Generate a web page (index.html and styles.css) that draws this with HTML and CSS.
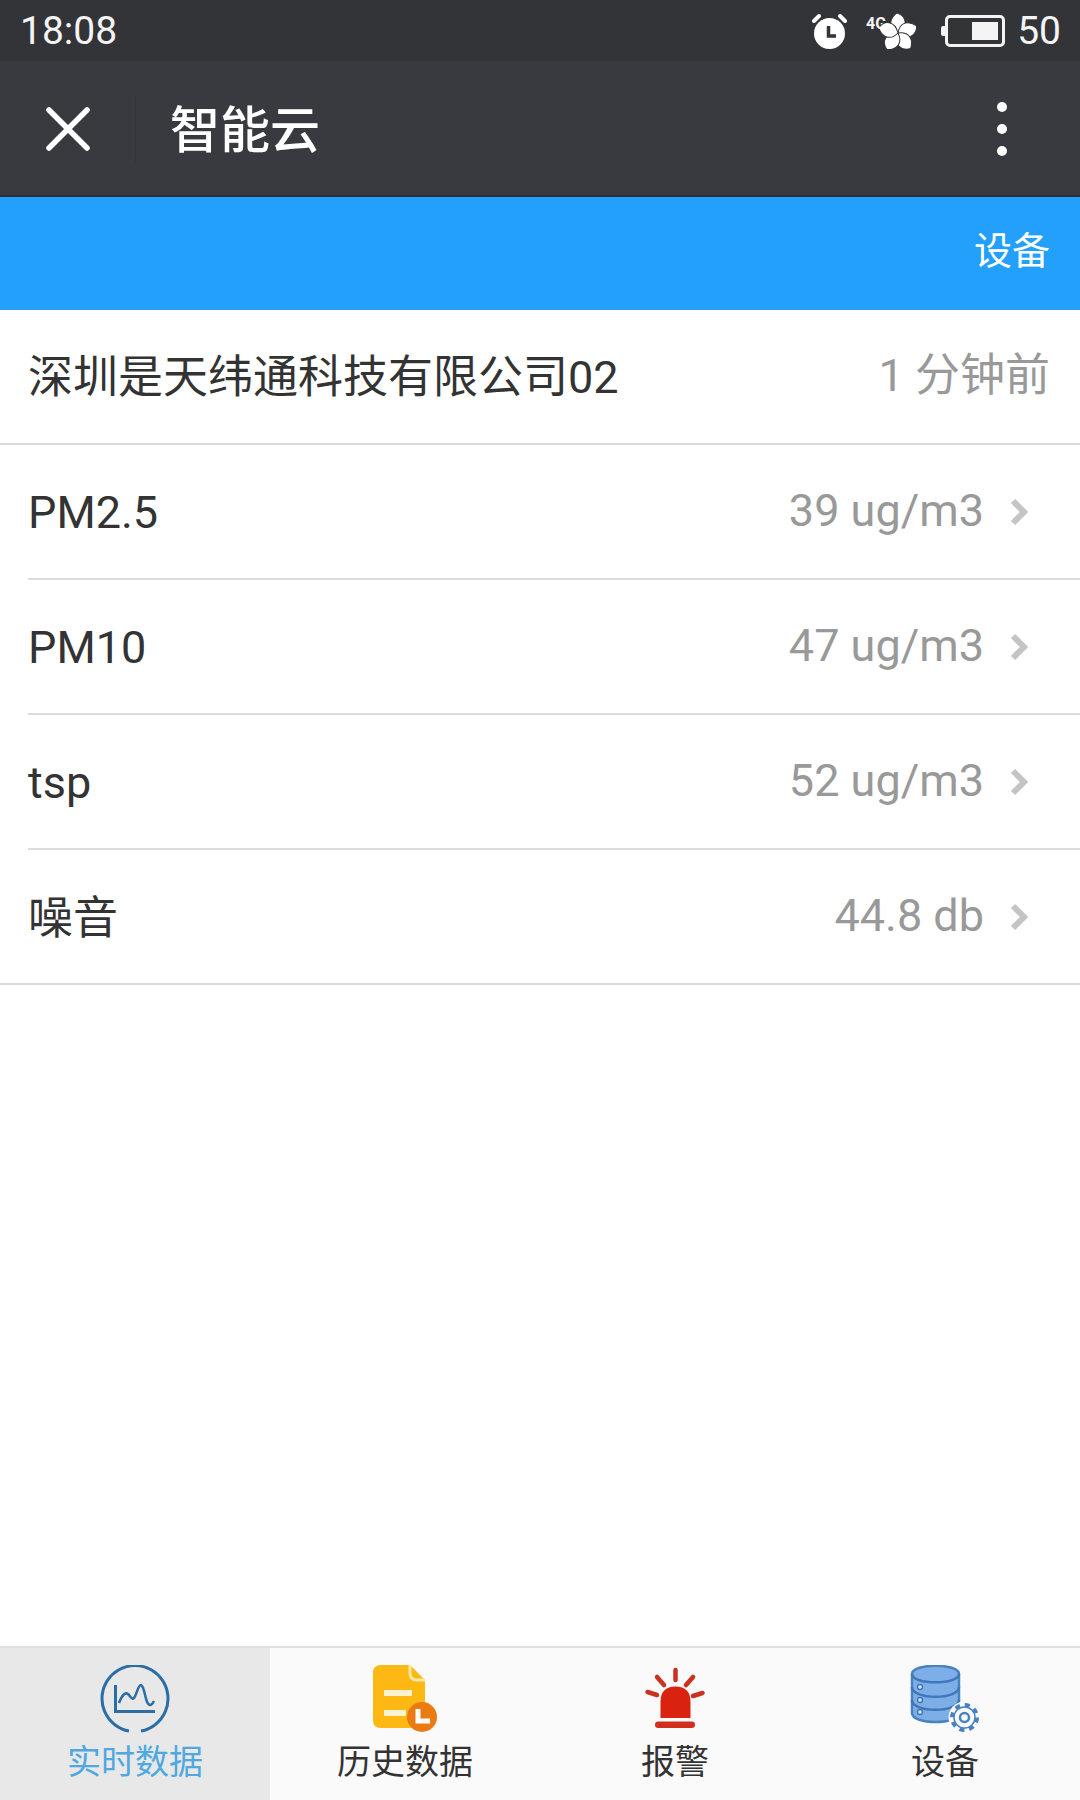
FILE: index.html
```html
<!DOCTYPE html>
<html>

<head>
    <title>智能云</title>
    <link rel="stylesheet" href="styles.css">
</head>

<body>
    <div class="page">
        <div class="status-bar">
            <span class="status-time">18:08</span>
            <div class="status-icons">
                <svg class="icon-alarm" viewBox="0 0 35 36" width="35" height="36">
                    <circle cx="17.5" cy="20.5" r="15.5" fill="#fff" />
                    <path d="M2 8 L7 3 M33 8 L28 3" stroke="#fff" stroke-width="4" stroke-linecap="round" />
                    <path d="M16.5 13 V23 H24" fill="none" stroke="#333438" stroke-width="3.5" />
                </svg>
                <div class="signal">
                    <span class="signal-label">4G</span>
                    <svg viewBox="0 0 36 36" width="36" height="36">
                        <g fill="#fff" stroke="#333438" stroke-width="1">
                            <path d="M18 20 C8 15 9 6 17 0 C26 3 29 13 18 20 Z" />
                            <path d="M18 20 C8 15 9 6 17 0 C26 3 29 13 18 20 Z" transform="rotate(72 18 20)" />
                            <path d="M18 20 C8 15 9 6 17 0 C26 3 29 13 18 20 Z" transform="rotate(144 18 20)" />
                            <path d="M18 20 C8 15 9 6 17 0 C26 3 29 13 18 20 Z" transform="rotate(216 18 20)" />
                            <path d="M18 20 C8 15 9 6 17 0 C26 3 29 13 18 20 Z" transform="rotate(288 18 20)" />
                        </g>
                    </svg>
                </div>
                <div class="battery">
                    <div class="battery-level"></div>
                </div>
                <span class="status-percent">50</span>
            </div>
        </div>

        <div class="nav-bar">
            <svg class="nav-close" viewBox="0 0 44 44" width="44" height="44">
                <path d="M3 3 L41 41 M41 3 L3 41" stroke="#fff" stroke-width="5.5" stroke-linecap="round" />
            </svg>
            <div class="nav-divider"></div>
            <span class="nav-title">智能云</span>
            <div class="nav-more">
                <span class="dot"></span>
                <span class="dot"></span>
                <span class="dot"></span>
            </div>
        </div>

        <div class="blue-bar">
            <span>设备</span>
        </div>

        <div class="device-row">
            <span class="row-name">深圳是天纬通科技有限公司02</span>
            <span class="row-value">1 分钟前</span>
        </div>

        <div class="data-list">
            <div class="data-row">
                <span class="row-name">PM2.5</span>
                <span class="row-value">39 ug/m3</span>
                <svg class="chevron" viewBox="0 0 18 28" width="18" height="28"><path d="M3 3 L14 14 L3 25" fill="none" stroke="#c4c4c4" stroke-width="6" /></svg>
            </div>
            <div class="data-row">
                <span class="row-name">PM10</span>
                <span class="row-value">47 ug/m3</span>
                <svg class="chevron" viewBox="0 0 18 28" width="18" height="28"><path d="M3 3 L14 14 L3 25" fill="none" stroke="#c4c4c4" stroke-width="6" /></svg>
            </div>
            <div class="data-row">
                <span class="row-name">tsp</span>
                <span class="row-value">52 ug/m3</span>
                <svg class="chevron" viewBox="0 0 18 28" width="18" height="28"><path d="M3 3 L14 14 L3 25" fill="none" stroke="#c4c4c4" stroke-width="6" /></svg>
            </div>
            <div class="data-row">
                <span class="row-name row-name-cjk">噪音</span>
                <span class="row-value">44.8 db</span>
                <svg class="chevron" viewBox="0 0 18 28" width="18" height="28"><path d="M3 3 L14 14 L3 25" fill="none" stroke="#c4c4c4" stroke-width="6" /></svg>
            </div>
        </div>

        <div class="spacer"></div>

        <div class="tab-bar">
            <div class="tab tab-active">
                <svg viewBox="0 0 70 70" width="70" height="70">
                    <path d="M29 66 A33 33 0 1 1 41 66" fill="none" stroke="#2b6ea6" stroke-width="3" />
                    <path d="M15.5 20 V46.5 H55" fill="none" stroke="#2b6ea6" stroke-width="3" />
                    <path d="M19 38 C22 30 25 27 28 29 C31 32 32 35 34 33 C37 29 38 20 41 20 C45 21 45 40 50 40 C52 40 53 38 54 36" fill="none" stroke="#2b6ea6" stroke-width="2.5" />
                </svg>
                <span>实时数据</span>
            </div>
            <div class="tab">
                <svg viewBox="0 0 70 70" width="70" height="70">
                    <path d="M11 0 H40 L55 15 V55 Q55 63 47 63 H11 Q3 63 3 55 V8 Q3 0 11 0 Z" fill="#fdb813" />
                    <path d="M40 0 V8 Q40 15 47 15 H55" fill="none" stroke="#fbe9a8" stroke-width="3" />
                    <path d="M14 28 H42 M14 48 H36" stroke="#fbf3d0" stroke-width="6" />
                    <circle cx="52" cy="52" r="15" fill="#ec7a12" />
                    <path d="M48 44 V56 H60" fill="none" stroke="#fff" stroke-width="5" />
                </svg>
                <span>历史数据</span>
            </div>
            <div class="tab">
                <svg viewBox="0 0 70 70" width="70" height="70">
                    <path d="M20.5 53 V37 Q20.5 21.5 35.5 21.5 Q50.5 21.5 50.5 37 V53 Z" fill="#d9230f" />
                    <rect x="15" y="56.5" width="40" height="6.5" rx="3.2" fill="#d2301c" />
                    <path d="M35.5 5 V15 M17 12 L24 20 M53 12 L46 20 M7.5 27 L17 30 M62.5 28 L53 31" stroke="#c8321f" stroke-width="4.5" stroke-linecap="round" />
                </svg>
                <span>报警</span>
            </div>
            <div class="tab">
                <svg viewBox="0 0 70 70" width="70" height="70">
                    <path d="M2 9 C2 -2 49 -2 49 9 V48 C49 60 2 60 2 48 Z" fill="#7eaee8" stroke="#4a82c0" stroke-width="2.5" />
                    <path d="M2 9 C2 20 49 20 49 9 M2 22 C2 35 49 35 49 22 M2 35 C2 48 49 48 49 35" fill="none" stroke="#3f78b8" stroke-width="2.5" />
                    <circle cx="10" cy="22" r="2.5" fill="#dce8f8" stroke="#3f78b8" stroke-width="1.5" />
                    <circle cx="10" cy="35" r="2.5" fill="#dce8f8" stroke="#3f78b8" stroke-width="1.5" />
                    <circle cx="10" cy="47" r="2.5" fill="#dce8f8" stroke="#3f78b8" stroke-width="1.5" />
                    <circle cx="54.5" cy="52.5" r="16" fill="#fafafa" />
                    <circle cx="54.5" cy="52.5" r="12.5" fill="none" stroke="#4a82c0" stroke-width="4" stroke-dasharray="5 4.8" />
                    <circle cx="54.5" cy="52.5" r="10.5" fill="#fafafa" stroke="#4a82c0" stroke-width="1.5" />
                    <circle cx="54.5" cy="52.5" r="4.5" fill="none" stroke="#4a82c0" stroke-width="2.5" />
                </svg>
                <span>设备</span>
            </div>
        </div>
    </div>
</body>

</html>
```

FILE: styles.css
```css
* {
    box-sizing: border-box;
}

body {
    margin: 0;
    font-family: Roboto, "Noto Sans CJK SC", sans-serif;
    background-color: #fff;
}

.page {
    width: 1080px;
    height: 1800px;
    display: flex;
    flex-direction: column;
    overflow: hidden;
}

.status-bar {
    height: 61px;
    padding: 0 19px 0 20px;
    display: flex;
    align-items: center;
    justify-content: space-between;
    background-color: #333438;
    color: #f4f4f4;
    font-size: 39px;
}

.status-icons {
    display: flex;
    align-items: center;
}

.icon-alarm {
    margin-right: 19px;
}

.signal {
    display: flex;
    align-items: center;
    margin-right: 29px;
}

.signal-label {
    font-size: 16px;
    font-weight: 700;
    margin-right: -6px;
    margin-top: -14px;
}

.battery {
    position: relative;
    width: 60px;
    height: 32px;
    margin-right: 12px;
    padding: 4px;
    display: flex;
    justify-content: flex-end;
    border: 3px solid #f4f4f4;
    border-radius: 5px;
}

.battery::before {
    content: "";
    position: absolute;
    left: -7px;
    top: 8px;
    width: 4px;
    height: 10px;
    background-color: #f4f4f4;
    border-radius: 2px 0 0 2px;
}

.battery-level {
    width: 26px;
    background-color: #f4f4f4;
}

.nav-bar {
    height: 136px;
    padding-top: 2px;
    padding-left: 46px;
    padding-right: 73px;
    display: flex;
    align-items: center;
    background-color: #393a3f;
    border-bottom: 2px solid #2b3136;
    color: #fff;
}

.nav-divider {
    width: 1px;
    height: 66px;
    margin-left: 45px;
    margin-right: 34px;
    background-color: #333438;
}

.nav-title {
    flex: 1;
    font-size: 50px;
    font-weight: 500;
    margin-top: -6px;
}

.nav-more {
    display: flex;
    flex-direction: column;
    gap: 12px;
}

.dot {
    width: 10px;
    height: 10px;
    border-radius: 50%;
    background-color: #fff;
}

.blue-bar {
    height: 113px;
    padding-right: 30px;
    padding-bottom: 12px;
    display: flex;
    align-items: center;
    justify-content: flex-end;
    background-color: #22a0fb;
    color: #fff;
    font-size: 38px;
}

.device-row {
    height: 135px;
    padding: 0 30px 0 28px;
    display: flex;
    align-items: center;
    justify-content: space-between;
    border-bottom: 2px solid #d9d9d9;
}

.row-name {
    flex: 1;
    margin-top: 2px;
    font-size: 45px;
    color: #333;
}

.row-value {
    margin-top: -2px;
    font-size: 45px;
    color: #999;
}

.device-row .row-name {
    margin-top: -7px;
}

.device-row .row-value {
    margin-top: -11px;
}

.row-name.row-name-cjk {
    margin-top: -4px;
}

.data-list {
    border-bottom: 2px solid #d9d9d9;
}

.data-row {
    height: 135px;
    margin-left: 28px;
    padding-right: 52px;
    display: flex;
    align-items: center;
    border-bottom: 2px solid #dcdcdc;
}

.data-row:last-child {
    height: 133px;
    border-bottom: none;
}

.chevron {
    margin-left: 26px;
}

.spacer {
    flex: 1;
}

.tab-bar {
    height: 154px;
    display: flex;
    background-color: #fafafa;
    border-top: 2px solid #e0e0e0;
}

.tab {
    width: 270px;
    padding-top: 17px;
    display: flex;
    flex-direction: column;
    align-items: center;
    color: #333;
    font-size: 34px;
}

.tab-active {
    background-color: #e8e8e8;
    color: #4fa9e0;
}
```
